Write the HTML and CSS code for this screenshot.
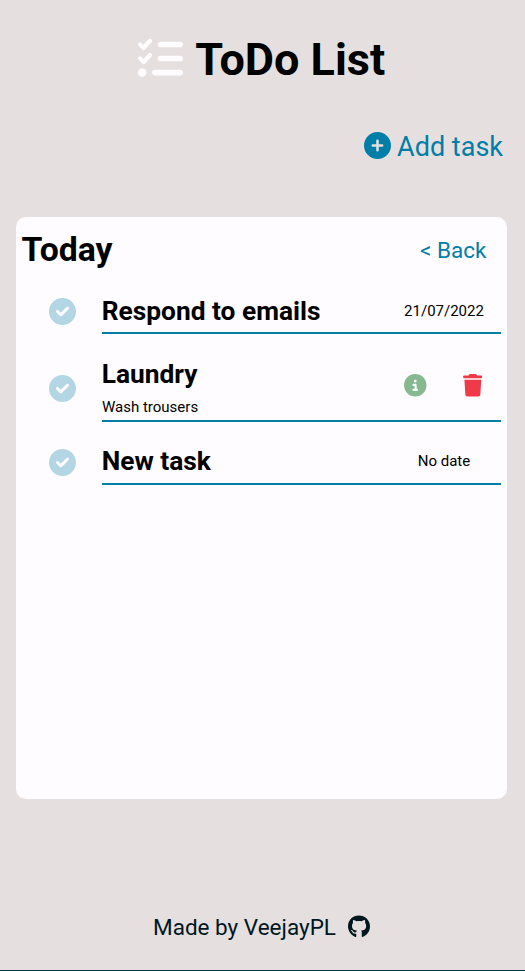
FILE: index.html
```html
<!DOCTYPE html>
<html lang="en">
<head>
<meta charset="UTF-8">
<title>ToDo List</title>
<link rel="stylesheet" href="styles.css">
</head>
<body>
<svg class="symbols" aria-hidden="true">
  <symbol id="check" viewBox="0 0 512 512"><path d="M0 256C0 114.6 114.6 0 256 0C397.4 0 512 114.6 512 256C512 397.4 397.4 512 256 512C114.6 512 0 397.4 0 256zM371.8 211.8C382.7 200.9 382.7 183.1 371.8 172.2C360.9 161.3 343.1 161.3 332.2 172.2L224 280.4L179.8 236.2C168.9 225.3 151.1 225.3 140.2 236.2C129.3 247.1 129.3 264.9 140.2 275.8L204.2 339.8C215.1 350.7 232.9 350.7 243.8 339.8L371.8 211.8z"/></symbol>
</svg>
<header class="header">
  <svg class="logo" viewBox="0 0 512 512"><path d="M24 96L64 136L136 56M24 256L64 296L136 216" stroke-width="48"/><path d="M256 96H480M256 256H480M192 416H480" stroke-width="64"/><circle cx="48" cy="416" r="24" stroke-width="48"/></svg>
  <h1 class="title">ToDo List</h1>
</header>
<nav class="nav">
  <a class="add"><svg class="add-icon" viewBox="0 0 512 512"><path d="M256 512A256 256 0 1 0 256 0a256 256 0 1 0 0 512zM232 344V280H168c-13.3 0-24-10.7-24-24s10.7-24 24-24h64V168c0-13.3 10.7-24 24-24s24 10.7 24 24v64h64c13.3 0 24 10.7 24 24s-10.7 24-24 24H280v64c0 13.3-10.7 24-24 24s-24-10.7-24-24z"/></svg>Add task</a>
</nav>
<main class="card">
  <div class="card-head">
    <h2 class="heading">Today</h2>
    <a class="back">&lt; Back</a>
  </div>
  <ul class="tasks">
    <li class="task">
      <svg class="check"><use href="#check"/></svg>
      <div class="body"><h3 class="name">Respond to emails</h3><span class="date">21/07/2022</span></div>
    </li>
    <li class="task task-tall">
      <svg class="check"><use href="#check"/></svg>
      <div class="body">
        <div class="text"><h3 class="name">Laundry</h3><p class="note">Wash trousers</p></div>
        <div class="actions">
          <svg class="info" viewBox="0 0 512 512"><path d="M256 512A256 256 0 1 0 256 0a256 256 0 1 0 0 512zM216 336h24V272H216c-13.3 0-24-10.7-24-24s10.7-24 24-24h48c13.3 0 24 10.7 24 24v88h8c13.3 0 24 10.7 24 24s-10.7 24-24 24H216c-13.3 0-24-10.7-24-24s10.7-24 24-24zm40-208a32 32 0 1 1 0 64 32 32 0 1 1 0-64z"/></svg>
          <svg class="trash" viewBox="0 0 448 512"><path d="M135.2 17.7L128 32H32C14.3 32 0 46.3 0 64S14.3 96 32 96H416c17.7 0 32-14.3 32-32s-14.3-32-32-32H320l-7.2-14.3C307.4 6.8 296.3 0 284.2 0H163.8c-12.1 0-23.2 6.8-28.6 17.7zM416 128H32L53.2 467c1.6 25.3 22.6 45 47.9 45H346.9c25.3 0 46.3-19.7 47.9-45L416 128z"/></svg>
        </div>
      </div>
    </li>
    <li class="task task-last">
      <svg class="check"><use href="#check"/></svg>
      <div class="body"><h3 class="name">New task</h3><span class="date">No date</span></div>
    </li>
  </ul>
</main>
<footer class="footer">
  <span>Made by VeejayPL</span>
  <svg class="github" viewBox="0 0 496 512"><path d="M244.8 8C106.1 8 0 113.3 0 252c0 110.9 69.8 205.8 169.5 239.2 12.8 2.3 17.3-5.6 17.3-12.1 0-6.2-.3-40.4-.3-61.4 0 0-70 15-84.7-29.8 0 0-11.4-29.1-27.8-36.6 0 0-22.9-15.7 1.6-15.4 0 0 24.9 2 38.6 25.8 21.9 38.6 58.6 27.5 72.9 20.9 2.3-16 8.8-27.1 16-33.7-55.9-6.2-112.3-14.3-112.3-110.5 0-27.5 7.6-41.3 23.6-58.9-2.6-6.5-11.1-33.3 2.6-67.9 20.9-6.5 69 27 69 27 20-5.6 41.5-8.5 62.8-8.5s42.8 2.9 62.8 8.5c0 0 48.1-33.6 69-27 13.7 34.7 5.2 61.4 2.6 67.9 16 17.7 25.8 31.5 25.8 58.9 0 96.5-58.9 104.2-114.8 110.5 9.2 7.9 17 22.9 17 46.4 0 33.7-.3 75.4-.3 83.6 0 6.5 4.6 14.4 17.3 12.1C428.2 457.8 496 362.9 496 252 496 113.3 383.5 8 244.8 8z"/></svg>
</footer>
</body>
</html>
```
FILE: styles.css
```css
* { box-sizing: border-box; margin: 0; padding: 0; }
body {
  height: 971px;
  display: flex;
  flex-direction: column;
  background: #e5e0df;
  color: #000;
  font: 15px/1.2 Roboto, sans-serif;
  border-bottom: 1px solid #003249;
}
svg { display: block; flex: none; fill: currentColor; }
.symbols { width: 0; height: 0; }
.header {
  height: 118px;
  display: flex;
  align-items: center;
  padding: 2px 0 0 138px;
  gap: 12.3px;
}
.logo {
  width: 45px;
  height: 45px;
  margin-bottom: 4px;
  color: #fffcff;
  fill: none;
  stroke: currentColor;
  stroke-linecap: round;
  stroke-linejoin: round;
}
.title { font-size: 45px; font-weight: 700; line-height: 54px; }
.nav {
  height: 99px;
  display: flex;
  justify-content: flex-end;
  padding: 13px 22px 0 0;
}
.add {
  height: 32px;
  display: flex;
  align-items: center;
  gap: 6.5px;
  color: #007ea7;
  font-size: 27px;
}
.add-icon { width: 27px; height: 27px; margin-bottom: 3px; }
.card {
  width: 491px;
  height: 582px;
  margin-left: 16px;
  padding: 0 6px;
  background: #fffcff;
  border-radius: 10px;
}
.card-head {
  height: 65px;
  display: flex;
  align-items: center;
  justify-content: space-between;
  padding: 2px 14.6px 0 0;
}
.heading { margin-left: -0.4px; font-size: 33.75px; font-weight: 700; }
.back { color: #007ea7; font-size: 22.5px; }
.tasks { list-style: none; }
.task {
  height: 44px;
  display: flex;
  align-items: center;
  padding-left: 26.5px;
  margin: 8px 0 19px;
}
.task-tall { height: 69px; }
.check { width: 27px; height: 27px; margin: 0 26.5px 1px 0; color: #b2d6e4; }
.task-tall .check { margin: 1px 26.5px 0 0; }
.body {
  flex: 1;
  height: 100%;
  display: flex;
  align-items: center;
  justify-content: space-between;
  border-bottom: 2px solid #007ea7;
}
.task-last .body { padding-bottom: 2px; }
.name { margin-left: -0.3px; font-size: 26.325px; font-weight: 700; line-height: 32px; }
.date { width: 114px; text-align: center; }
.note { margin-top: 8px; }
.actions {
  display: flex;
  gap: 36px;
  padding: 0 18.6px 2px 0;
}
.info { width: 22.5px; height: 22.5px; color: #87b991; }
.trash { width: 19.7px; height: 22.5px; color: #f03a47; }
.footer {
  display: flex;
  align-items: center;
  gap: 12.2px;
  margin-top: 115px;
  padding-left: 153px;
  color: #00171f;
  font-size: 22.5px;
}
.github { width: 22px; height: 23px; margin-bottom: 2px; }
```
